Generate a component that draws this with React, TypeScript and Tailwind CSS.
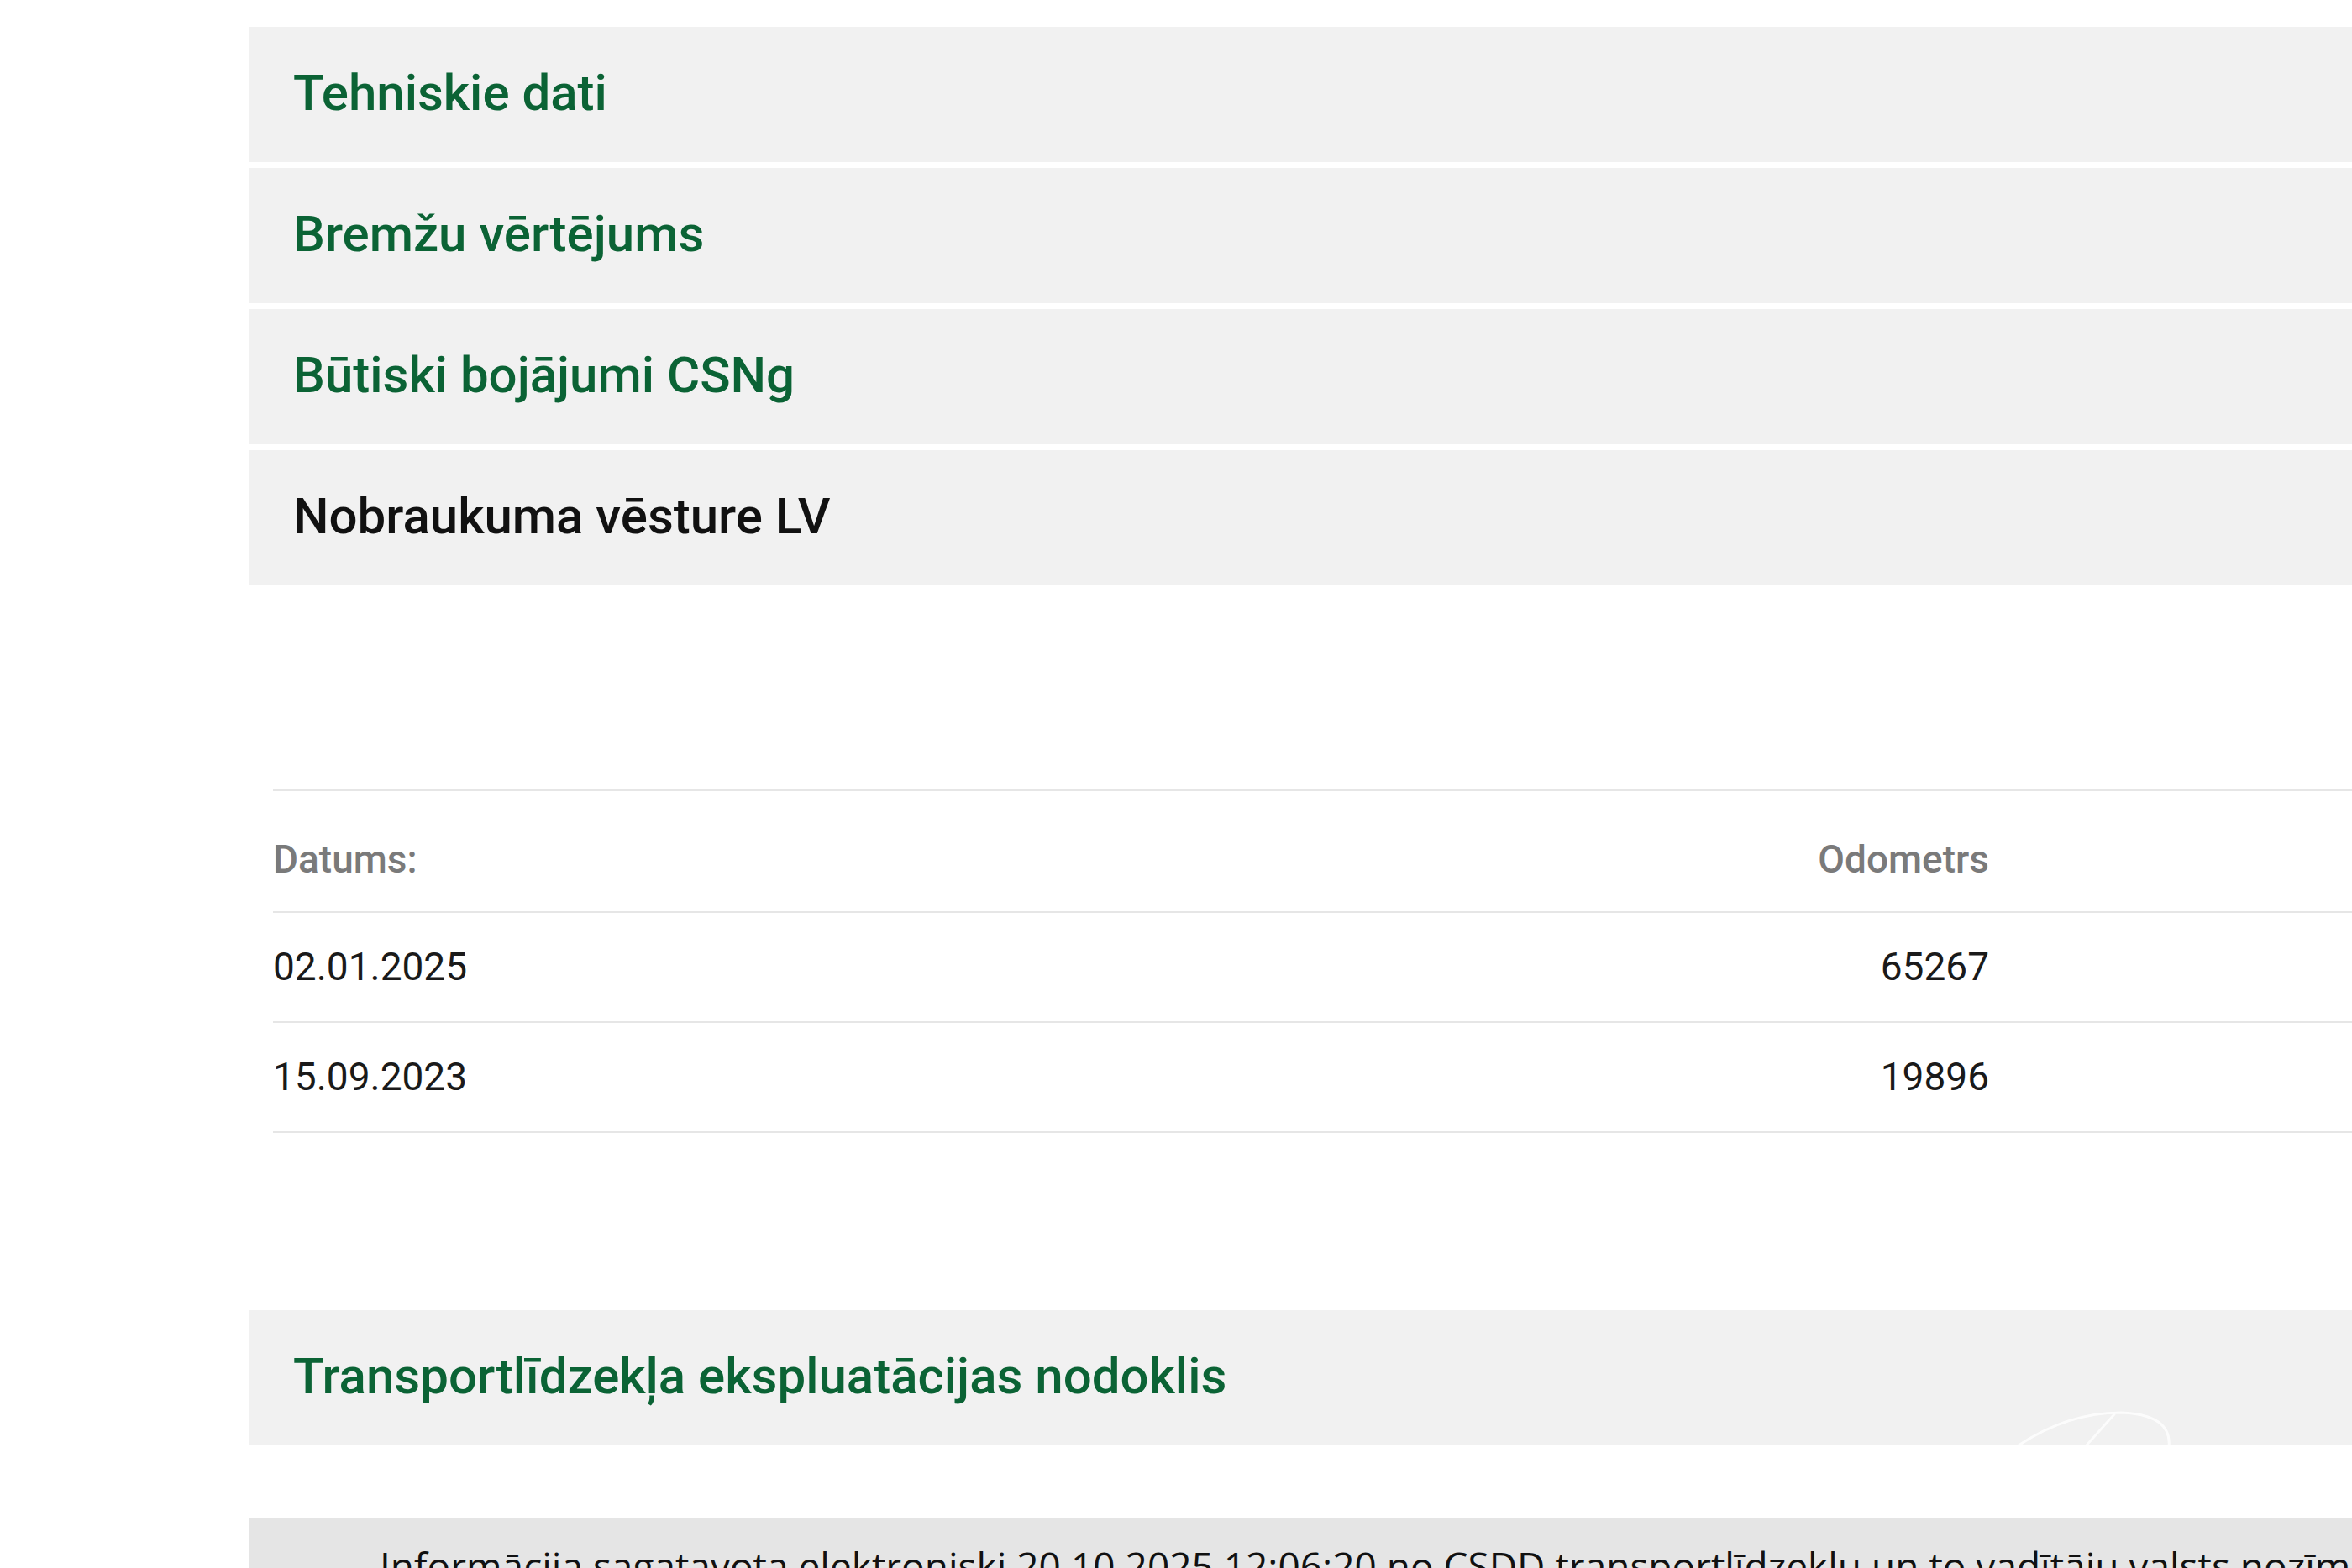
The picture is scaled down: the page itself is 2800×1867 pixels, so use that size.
import React from 'react';

const sections = [
  { title: 'Tehniskie dati', active: false },
  { title: 'Bremžu vērtējums', active: false },
  { title: 'Būtiski bojājumi CSNg', active: false },
  { title: 'Nobraukuma vēsture LV', active: true },
];

const mileage = [
  { date: '02.01.2025', km: '65267' },
  { date: '15.09.2023', km: '19896' },
];

function Panel({ title, active, children }: { title: string; active?: boolean; children?: React.ReactNode }) {
  return (
    <div className="relative flex h-[161px] w-[2700px] items-center overflow-hidden bg-[#f1f1f1] pb-[3px] pl-[52px]">
      <h2 className={`text-[60px] font-medium leading-none ${active ? 'text-[#111111]' : 'text-[#0b6335]'}`}>
        {title}
      </h2>
      {children}
    </div>
  );
}

export default function App() {
  return (
    <div className="h-[1867px] w-[2800px] overflow-hidden bg-white font-['Roboto',sans-serif]">
      <div className="pl-[297px] pt-[32px]">
        <div className="flex flex-col gap-[7px]">
          {sections.map((s) => (
            <Panel key={s.title} title={s.title} active={s.active} />
          ))}
        </div>

        {/* odometer history */}
        <div className="ml-[28px] mt-[243px] border-t-2 border-[#e6e6e6] text-[46px]">
          <div className="flex h-[145px] items-center border-b-2 border-[#e6e6e6] pt-[20px] font-medium text-[#7a7a7a]">
            <div className="flex w-[2043px] justify-between">
              <span>Datums:</span>
              <span>Odometrs</span>
            </div>
          </div>
          {mileage.map((row) => (
            <div key={row.date} className="flex h-[131px] items-center border-b-2 border-[#e6e6e6] text-[#1a1a1a]">
              <div className="flex w-[2043px] justify-between">
                <span>{row.date}</span>
                <span>{row.km}</span>
              </div>
            </div>
          ))}
        </div>

        <div className="mt-[211px]">
          <Panel title="Transportlīdzekļa ekspluatācijas nodoklis">
            <svg
              className="absolute left-[2103px] top-[120px] opacity-80"
              width="190"
              height="45"
              viewBox="0 0 190 45"
              fill="none"
              stroke="#ffffff"
              strokeWidth="3"
              strokeLinecap="round"
            >
              <path d="M0 43 Q60 2 125 2 Q186 4 182 43" />
              <path d="M82 43 L117 4" />
            </svg>
          </Panel>
        </div>

        <div className="mt-[87px] h-[200px] w-[2700px] bg-[#e5e5e5] pl-[155px] pt-[24px]">
          <p className="whitespace-nowrap font-['Open_Sans',sans-serif] text-[46px] leading-[1.4] text-[#111111]">
            Informācija sagatavota elektroniski 20.10.2025 12:06:20 no CSDD transportlīdzekļu un to vadītāju valsts
            nozīmes reģistra datiem.
          </p>
        </div>
      </div>
    </div>
  );
}
